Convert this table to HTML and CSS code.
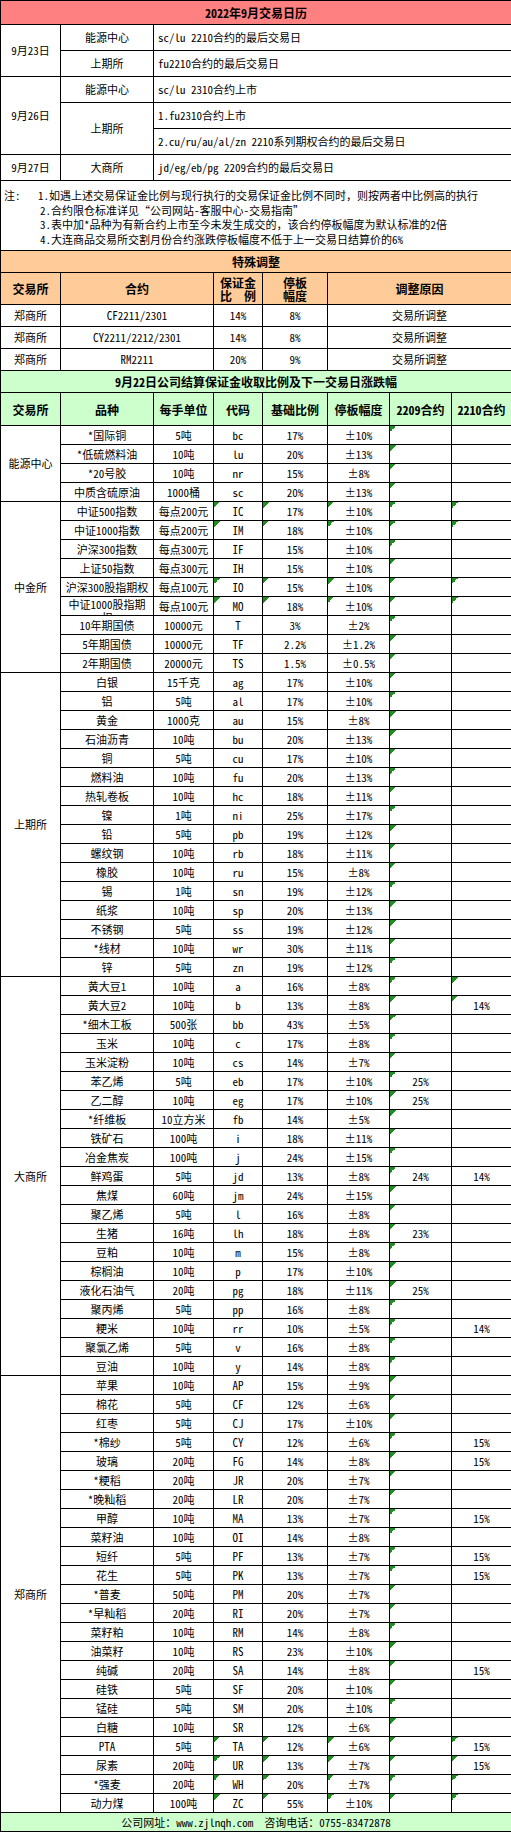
FILE: index.html
```html
<!DOCTYPE html>
<html lang="zh-CN">
<head>
<meta charset="utf-8">
<title>2022年9月交易日历</title>
<link rel="stylesheet" href="styles.css">
</head>
<body>
<table class="sheet">
  <colgroup>
    <col class="w60"><col class="w93"><col class="w60"><col class="w49"><col class="w65"><col class="w62"><col class="w62"><col class="w60">
  </colgroup>
  <tbody>
    <tr class="r-title salmon"><th colspan="8">2022年9月交易日历</th></tr>
    <tr class="r-cal"><td rowspan="2">9月23日</td><td>能源中心</td><td colspan="6" class="left">sc/lu 2210合约的最后交易日</td></tr>
    <tr class="r-cal"><td>上期所</td><td colspan="6" class="left">fu2210合约的最后交易日</td></tr>
    <tr class="r-cal"><td rowspan="3">9月26日</td><td>能源中心</td><td colspan="6" class="left">sc/lu 2310合约上市</td></tr>
    <tr class="r-cal"><td rowspan="2">上期所</td><td colspan="6" class="left">1.fu2310合约上市</td></tr>
    <tr class="r-cal"><td colspan="6" class="left">2.cu/ru/au/al/zn 2210系列期权合约的最后交易日</td></tr>
    <tr class="r-cal"><td>9月27日</td><td>大商所</td><td colspan="6" class="left">jd/eg/eb/pg 2209合约的最后交易日</td></tr>
    <tr class="r-notes">
      <td colspan="8" class="notes">
        <div class="note">
          <span class="note-label">注:</span>
          <div class="note-items">
            <div>1.如遇上述交易保证金比例与现行执行的交易保证金比例不同时，则按两者中比例高的执行</div>
            <div class="indent">2.合约限仓标准详见“公司网站-客服中心-交易指南”</div>
            <div class="indent">3.表中加*品种为有新合约上市至今未发生成交的，该合约停板幅度为默认标准的2倍</div>
            <div class="indent">4.大连商品交易所交割月份合约涨跌停板幅度不低于上一交易日结算价的6%</div>
          </div>
        </div>
      </td>
    </tr>
  </tbody>
  <tbody>
    <tr class="r-sub orange"><th colspan="8">特殊调整</th></tr>
    <tr class="r-sphead orange"><th>交易所</th><th colspan="2">合约</th><th>保证金<br>比　例</th><th>停板<br>幅度</th><th colspan="3">调整原因</th></tr>
    <tr class="r-sp"><td>郑商所</td><td colspan="2">CF2211/2301</td><td>14%</td><td>8%</td><td colspan="3">交易所调整</td></tr>
    <tr class="r-sp"><td>郑商所</td><td colspan="2">CY2211/2212/2301</td><td>14%</td><td>8%</td><td colspan="3">交易所调整</td></tr>
    <tr class="r-sp"><td>郑商所</td><td colspan="2">RM2211</td><td>20%</td><td>9%</td><td colspan="3">交易所调整</td></tr>
  </tbody>
  <tbody>
    <tr class="r-sub green"><th colspan="8">9月22日公司结算保证金收取比例及下一交易日涨跌幅</th></tr>
    <tr class="r-ghead green"><th>交易所</th><th>品种</th><th>每手单位</th><th>代码</th><th>基础比例</th><th>停板幅度</th><th>2209合约</th><th>2210合约</th></tr>

    <tr class="r-d"><td rowspan="4">能源中心</td><td>*国际铜</td><td>5吨</td><td>bc</td><td>17%</td><td>±10%</td><td class="g"></td><td></td></tr>
    <tr class="r-d"><td>*低硫燃料油</td><td>10吨</td><td>lu</td><td>20%</td><td>±13%</td><td class="g"></td><td></td></tr>
    <tr class="r-d"><td>*20号胶</td><td>10吨</td><td>nr</td><td>15%</td><td>±8%</td><td class="g"></td><td></td></tr>
    <tr class="r-d"><td>中质含硫原油</td><td>1000桶</td><td>sc</td><td>20%</td><td>±13%</td><td class="g"></td><td></td></tr>

    <tr class="r-d"><td rowspan="9">中金所</td><td>中证500指数</td><td>每点200元</td><td class="g">IC</td><td class="g">17%</td><td class="g">±10%</td><td class="g"></td><td class="g"></td></tr>
    <tr class="r-d"><td>中证1000指数</td><td>每点200元</td><td class="g">IM</td><td class="g">18%</td><td class="g">±10%</td><td class="g"></td><td class="g"></td></tr>
    <tr class="r-d"><td>沪深300指数</td><td>每点300元</td><td>IF</td><td>15%</td><td>±10%</td><td class="g"></td><td></td></tr>
    <tr class="r-d"><td>上证50指数</td><td>每点300元</td><td>IH</td><td>15%</td><td>±10%</td><td class="g"></td><td></td></tr>
    <tr class="r-d"><td>沪深300股指期权</td><td>每点100元</td><td class="g">IO</td><td class="g">15%</td><td class="g">±10%</td><td class="g"></td><td class="g"></td></tr>
    <tr class="r-d"><td><div class="clip">中证1000股指期<br>权</div></td><td>每点100元</td><td class="g">MO</td><td class="g">18%</td><td class="g">±10%</td><td class="g"></td><td class="g"></td></tr>
    <tr class="r-d"><td>10年期国债</td><td>10000元</td><td>T</td><td>3%</td><td>±2%</td><td class="g"></td><td></td></tr>
    <tr class="r-d"><td>5年期国债</td><td>10000元</td><td>TF</td><td>2.2%</td><td>±1.2%</td><td class="g"></td><td></td></tr>
    <tr class="r-d"><td>2年期国债</td><td>20000元</td><td>TS</td><td>1.5%</td><td>±0.5%</td><td class="g"></td><td></td></tr>

    <tr class="r-d"><td rowspan="16">上期所</td><td>白银</td><td>15千克</td><td>ag</td><td>17%</td><td>±10%</td><td class="g"></td><td></td></tr>
    <tr class="r-d"><td>铝</td><td>5吨</td><td>al</td><td>17%</td><td>±10%</td><td class="g"></td><td></td></tr>
    <tr class="r-d"><td>黄金</td><td>1000克</td><td>au</td><td>15%</td><td>±8%</td><td class="g"></td><td></td></tr>
    <tr class="r-d"><td>石油沥青</td><td>10吨</td><td>bu</td><td>20%</td><td>±13%</td><td class="g"></td><td></td></tr>
    <tr class="r-d"><td>铜</td><td>5吨</td><td>cu</td><td>17%</td><td>±10%</td><td class="g"></td><td></td></tr>
    <tr class="r-d"><td>燃料油</td><td>10吨</td><td>fu</td><td>20%</td><td>±13%</td><td class="g"></td><td></td></tr>
    <tr class="r-d"><td>热轧卷板</td><td>10吨</td><td>hc</td><td>18%</td><td>±11%</td><td class="g"></td><td></td></tr>
    <tr class="r-d"><td>镍</td><td>1吨</td><td>ni</td><td>25%</td><td>±17%</td><td class="g"></td><td></td></tr>
    <tr class="r-d"><td>铅</td><td>5吨</td><td>pb</td><td>19%</td><td>±12%</td><td class="g"></td><td></td></tr>
    <tr class="r-d"><td>螺纹钢</td><td>10吨</td><td>rb</td><td>18%</td><td>±11%</td><td class="g"></td><td></td></tr>
    <tr class="r-d"><td>橡胶</td><td>10吨</td><td>ru</td><td>15%</td><td>±8%</td><td class="g"></td><td></td></tr>
    <tr class="r-d"><td>锡</td><td>1吨</td><td>sn</td><td>19%</td><td>±12%</td><td class="g"></td><td></td></tr>
    <tr class="r-d"><td>纸浆</td><td>10吨</td><td>sp</td><td>20%</td><td>±13%</td><td class="g"></td><td></td></tr>
    <tr class="r-d"><td>不锈钢</td><td>5吨</td><td>ss</td><td>19%</td><td>±12%</td><td class="g"></td><td></td></tr>
    <tr class="r-d"><td>*线材</td><td>10吨</td><td>wr</td><td>30%</td><td>±11%</td><td class="g"></td><td></td></tr>
    <tr class="r-d"><td>锌</td><td>5吨</td><td>zn</td><td>19%</td><td>±12%</td><td class="g"></td><td></td></tr>

    <tr class="r-d"><td rowspan="21">大商所</td><td>黄大豆1</td><td>10吨</td><td>a</td><td>16%</td><td>±8%</td><td class="g"></td><td class="g"></td></tr>
    <tr class="r-d"><td>黄大豆2</td><td>10吨</td><td>b</td><td>13%</td><td>±8%</td><td class="g"></td><td class="g">14%</td></tr>
    <tr class="r-d"><td>*细木工板</td><td>500张</td><td>bb</td><td>43%</td><td>±5%</td><td class="g"></td><td></td></tr>
    <tr class="r-d"><td>玉米</td><td>10吨</td><td>c</td><td>17%</td><td>±8%</td><td class="g"></td><td></td></tr>
    <tr class="r-d"><td>玉米淀粉</td><td>10吨</td><td>cs</td><td>14%</td><td>±7%</td><td class="g"></td><td></td></tr>
    <tr class="r-d"><td>苯乙烯</td><td>5吨</td><td>eb</td><td>17%</td><td>±10%</td><td class="g">25%</td><td></td></tr>
    <tr class="r-d"><td>乙二醇</td><td>10吨</td><td>eg</td><td>17%</td><td>±10%</td><td class="g">25%</td><td></td></tr>
    <tr class="r-d"><td>*纤维板</td><td>10立方米</td><td>fb</td><td>14%</td><td>±5%</td><td class="g"></td><td></td></tr>
    <tr class="r-d"><td>铁矿石</td><td>100吨</td><td>i</td><td>18%</td><td>±11%</td><td class="g"></td><td></td></tr>
    <tr class="r-d"><td>冶金焦炭</td><td>100吨</td><td>j</td><td>24%</td><td>±15%</td><td class="g"></td><td></td></tr>
    <tr class="r-d"><td>鲜鸡蛋</td><td>5吨</td><td>jd</td><td>13%</td><td>±8%</td><td class="g">24%</td><td>14%</td></tr>
    <tr class="r-d"><td>焦煤</td><td>60吨</td><td>jm</td><td>24%</td><td>±15%</td><td class="g"></td><td></td></tr>
    <tr class="r-d"><td>聚乙烯</td><td>5吨</td><td>l</td><td>16%</td><td>±8%</td><td class="g"></td><td></td></tr>
    <tr class="r-d"><td>生猪</td><td>16吨</td><td>lh</td><td>18%</td><td>±8%</td><td class="g">23%</td><td></td></tr>
    <tr class="r-d"><td>豆粕</td><td>10吨</td><td>m</td><td>15%</td><td>±8%</td><td class="g"></td><td></td></tr>
    <tr class="r-d"><td>棕榈油</td><td>10吨</td><td>p</td><td>17%</td><td>±10%</td><td class="g"></td><td></td></tr>
    <tr class="r-d"><td>液化石油气</td><td>20吨</td><td>pg</td><td>18%</td><td>±11%</td><td class="g">25%</td><td></td></tr>
    <tr class="r-d"><td>聚丙烯</td><td>5吨</td><td>pp</td><td>16%</td><td>±8%</td><td class="g"></td><td></td></tr>
    <tr class="r-d"><td>粳米</td><td>10吨</td><td>rr</td><td>10%</td><td>±5%</td><td class="g"></td><td>14%</td></tr>
    <tr class="r-d"><td>聚氯乙烯</td><td>5吨</td><td>v</td><td>16%</td><td>±8%</td><td class="g"></td><td></td></tr>
    <tr class="r-d"><td>豆油</td><td>10吨</td><td>y</td><td>14%</td><td>±8%</td><td class="g"></td><td></td></tr>

    <tr class="r-d"><td rowspan="23">郑商所</td><td>苹果</td><td>10吨</td><td>AP</td><td>15%</td><td>±9%</td><td class="g"></td><td></td></tr>
    <tr class="r-d"><td>棉花</td><td>5吨</td><td>CF</td><td>12%</td><td>±6%</td><td class="g"></td><td></td></tr>
    <tr class="r-d"><td>红枣</td><td>5吨</td><td>CJ</td><td>17%</td><td>±10%</td><td class="g"></td><td></td></tr>
    <tr class="r-d"><td>*棉纱</td><td>5吨</td><td>CY</td><td>12%</td><td>±6%</td><td class="g"></td><td>15%</td></tr>
    <tr class="r-d"><td>玻璃</td><td>20吨</td><td>FG</td><td>14%</td><td>±8%</td><td class="g"></td><td>15%</td></tr>
    <tr class="r-d"><td>*粳稻</td><td>20吨</td><td>JR</td><td>20%</td><td>±7%</td><td class="g"></td><td></td></tr>
    <tr class="r-d"><td>*晚籼稻</td><td>20吨</td><td>LR</td><td>20%</td><td>±7%</td><td class="g"></td><td></td></tr>
    <tr class="r-d"><td>甲醇</td><td>10吨</td><td>MA</td><td>13%</td><td>±7%</td><td class="g"></td><td>15%</td></tr>
    <tr class="r-d"><td>菜籽油</td><td>10吨</td><td>OI</td><td>14%</td><td>±8%</td><td class="g"></td><td></td></tr>
    <tr class="r-d"><td>短纤</td><td>5吨</td><td>PF</td><td>13%</td><td>±7%</td><td class="g"></td><td>15%</td></tr>
    <tr class="r-d"><td>花生</td><td>5吨</td><td>PK</td><td>13%</td><td>±7%</td><td class="g"></td><td>15%</td></tr>
    <tr class="r-d"><td>*普麦</td><td>50吨</td><td>PM</td><td>20%</td><td>±7%</td><td class="g"></td><td></td></tr>
    <tr class="r-d"><td>*早籼稻</td><td>20吨</td><td>RI</td><td>20%</td><td>±7%</td><td class="g"></td><td></td></tr>
    <tr class="r-d"><td>菜籽粕</td><td>10吨</td><td>RM</td><td>14%</td><td>±8%</td><td class="g"></td><td></td></tr>
    <tr class="r-d"><td>油菜籽</td><td>10吨</td><td>RS</td><td>23%</td><td>±10%</td><td class="g"></td><td></td></tr>
    <tr class="r-d"><td>纯碱</td><td>20吨</td><td>SA</td><td>14%</td><td>±8%</td><td class="g"></td><td>15%</td></tr>
    <tr class="r-d"><td>硅铁</td><td>5吨</td><td>SF</td><td>20%</td><td>±10%</td><td class="g"></td><td></td></tr>
    <tr class="r-d"><td>锰硅</td><td>5吨</td><td>SM</td><td>20%</td><td>±10%</td><td class="g"></td><td></td></tr>
    <tr class="r-d"><td>白糖</td><td>10吨</td><td>SR</td><td>12%</td><td>±6%</td><td class="g"></td><td></td></tr>
    <tr class="r-d"><td>PTA</td><td>5吨</td><td class="g">TA</td><td class="g">12%</td><td class="g">±6%</td><td class="g"></td><td class="g">15%</td></tr>
    <tr class="r-d"><td>尿素</td><td>20吨</td><td class="g">UR</td><td class="g">13%</td><td class="g">±7%</td><td class="g"></td><td class="g">15%</td></tr>
    <tr class="r-d"><td>*强麦</td><td>20吨</td><td class="g">WH</td><td class="g">20%</td><td class="g">±7%</td><td class="g"></td><td class="g"></td></tr>
    <tr class="r-d"><td>动力煤</td><td>100吨</td><td class="g">ZC</td><td class="g">55%</td><td class="g">±10%</td><td class="g"></td><td class="g"></td></tr>

    <tr class="r-foot green"><td colspan="8">公司网址：www.zjlnqh.com　咨询电话：0755-83472878</td></tr>
  </tbody>
</table>
</body>
</html>
```
FILE: styles.css
```css
html, body {
  margin: 0;
  padding: 0;
  background: #ffffff;
}

body {
  font-family: "Noto Sans Mono CJK SC", "Noto Sans CJK SC", "DejaVu Sans", sans-serif;
  font-size: 11px;
  color: #000000;
}

.sheet {
  border-collapse: collapse;
  table-layout: fixed;
  width: 511px;
}

.w60 { width: 60px; }
.w93 { width: 93px; }
.w49 { width: 49px; }
.w65 { width: 65px; }
.w62 { width: 62px; }

.sheet td,
.sheet th {
  border: 1px solid #000000;
  padding: 0 2px;
  text-align: center;
  vertical-align: middle;
  white-space: nowrap;
  overflow: hidden;
  line-height: 13px;
}

.sheet th {
  font-weight: bold;
  font-size: 12px;
}

.sheet td.left {
  text-align: left;
  padding-left: 4px;
}

.salmon { background: #ff8080; }
.orange { background: #ffcc99; }
.green { background: #ccffcc; }

.r-title { height: 24px; }
.r-cal { height: 26px; }
.r-notes { height: 70px; }
.r-sub { height: 22px; }
.r-sphead { height: 32px; }
.r-sp { height: 22px; }
.r-ghead { height: 33px; }
.r-d { height: 19px; }
.r-foot { height: 19px; }

.sheet td.notes {
  text-align: left;
  vertical-align: top;
  padding: 7px 0 0 3px;
  white-space: nowrap;
}

.note {
  display: flex;
  line-height: 14.5px;
}

.note-label {
  width: 34px;
  flex: none;
}

.note-items .indent {
  padding-left: 2px;
}

.clip {
  height: 18px;
  overflow: hidden;
  padding-top: 1px;
  box-sizing: border-box;
  line-height: 13px;
}

.sheet td.g {
  background-image: linear-gradient(135deg, #1f8f1f 0, #1f8f1f 50%, transparent 50%);
  background-repeat: no-repeat;
  background-position: 0 0;
  background-size: 6px 6px;
}
```
